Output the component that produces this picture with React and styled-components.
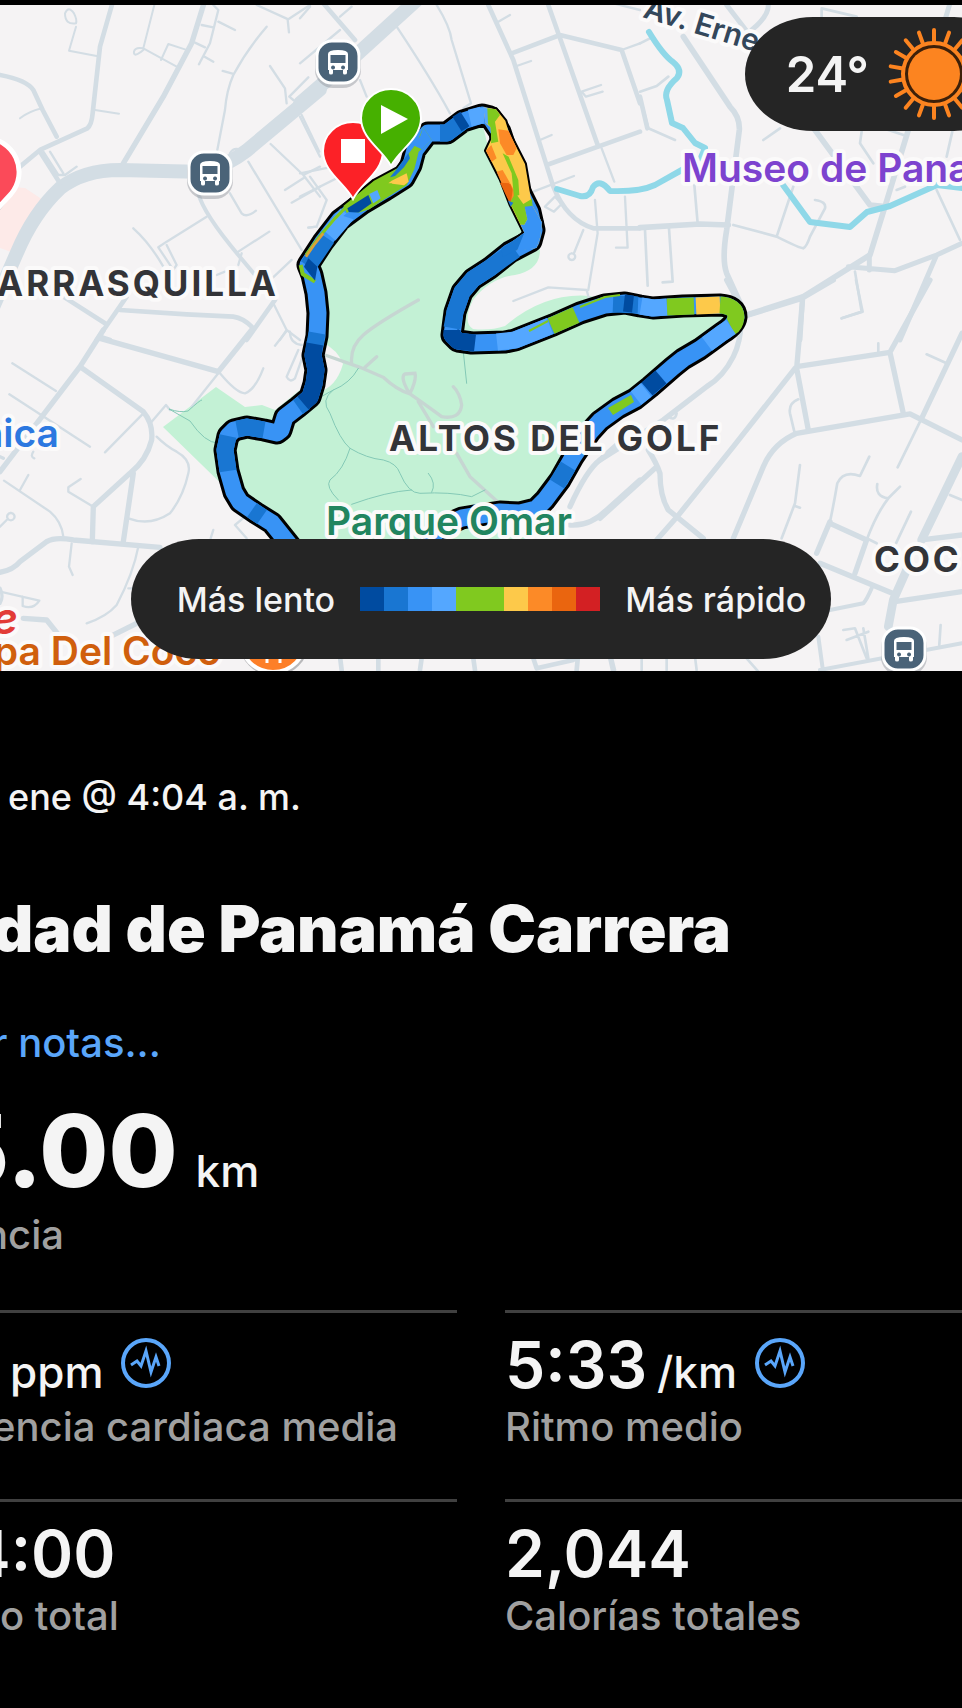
import React from "react";
import styled, { createGlobalStyle } from "styled-components";

const GlobalStyle = createGlobalStyle`
  * { box-sizing: border-box; }
  html { background: #000; }
  body { margin: 0; background: #000; overflow-x: hidden; }
`;

const speedColors = [
  "#004ba0", "#1976d2", "#3893f5", "#54a7ff", "#80c91f",
  "#80c91f", "#fdc94a", "#fc8a27", "#ea650f", "#d32023",
];
const [NAVY, BLUE, SKY, LIGHT, GREEN, , YELLOW, ORANGE, RUST] = speedColors;

/* ---------- layout ---------- */

const Page = styled.main`
  padding-top: 5px;
  min-height: 100vh;
  overflow: hidden;
  background: #000;
  color: #f4f4f4;
  font-family: Inter, "Liberation Sans", sans-serif;
  font-weight: 500;
`;

const MapPanel = styled.section`
  position: relative;
  overflow: hidden;
`;

const MapCanvas = styled.svg`
  display: block;
  width: 100%;
  height: auto;
`;

const MapLabel = styled.text`
  font-family: Inter, "Liberation Sans", sans-serif;
  font-weight: ${(p) => (p.$district ? 700 : 600)};
  font-size: ${(p) => p.$size || 39}px;
  fill: ${(p) => p.$color || "#333438"};
  letter-spacing: ${(p) => (p.$district ? "3px" : "normal")};
  stroke: #fbfafa;
  stroke-width: 8px;
  stroke-linejoin: round;
  paint-order: stroke;
`;

const Pill = styled.div`
  display: flex;
  align-items: center;
  background: #252525;
  border-radius: 68px / 50%;
`;

const Weather = styled(Pill)`
  position: absolute;
  top: 12px;
  right: -60px;
  height: 114px;
  padding: 0 41px;
  gap: 18px;
  font-size: 49px;
  font-weight: 600;
`;

const LegendDock = styled.div`
  position: absolute;
  left: 0;
  right: 0;
  bottom: 12px;
  display: flex;
  justify-content: center;
`;

const Legend = styled(Pill)`
  height: 120px;
  padding: 0 25px 0 46px;
  gap: 25px;
  font-size: 34px;
  white-space: nowrap;
`;

const Scale = styled.div`
  display: flex;
`;

const Swatch = styled.span`
  width: 24px;
  height: 24px;
  background: ${(p) => p.$color};
`;

const Details = styled.section`
  padding-top: 104px;
`;

/* $bleed counts 8px steps that a line runs past the screen's left edge. */
const Line = styled.div`
  margin-left: ${(p) => (p.$bleed || 0) * -8}px;
  white-space: nowrap;
`;

const DateLine = styled(Line)`
  margin-bottom: 70px;
  font-size: 36px;
  line-height: 44px;
`;

const Title = styled(Line)`
  margin-top: 0;
  margin-bottom: 50px;
  font-size: 64px;
  line-height: 80px;
  font-weight: 900;
`;

const NotesLink = styled(Line)`
  display: block;
  margin-bottom: 24px;
  font-size: 40px;
  line-height: 48px;
  color: #5aa6fa;
  text-decoration: none;
`;

const Headline = styled.div`
  margin-bottom: 51px;
`;

const ValueRow = styled(Line)`
  display: flex;
  align-items: baseline;
  gap: ${(p) => (p.$large ? 18 : 10)}px;
  height: ${(p) => (p.$large ? 120 : 76)}px;
  line-height: ${(p) => (p.$large ? 120 : 76)}px;
  font-size: ${(p) => (p.$large ? 100 : 64)}px;
  font-weight: ${(p) => (p.$large ? 800 : 600)};
`;

const Value = styled.span`
  /* keeps the row's baseline when there is no number to show */
  &:empty::before {
    content: "\\200b";
  }
`;

const Unit = styled.span`
  font-size: 44px;
  font-weight: 500;
`;

const Label = styled(Line)`
  font-size: 40px;
  line-height: 48px;
  color: #a0a0a0;
`;

const Stats = styled.div`
  display: grid;
  grid-template-columns: minmax(0, 1fr) minmax(0, 1fr);
  column-gap: 48px;
`;

const Stat = styled.div`
  border-top: 3px solid #404040;
  padding: 14px 0 48px;
`;

const GraphButton = styled.button`
  padding: 0;
  border: 0;
  margin-left: 8px;
  background: none;
  color: #5aa6fa;
  line-height: 0;
  cursor: pointer;
`;

/* ---------- map drawing ---------- */

/* Each tile holds its roads as [width, path], in thirds of a map unit. */
const tiles = [
  {
    x: 0, y: 0,
    roads: [
      [42, "M-20,920 L50,760 Q100,640 180,565 Q250,510 360,510 L620,516 Q690,490 740,452 L960,268"],
      [14, "M340,0 L300,140 L278,340 Q275,375 262,385 L120,450 L60,500 M0,225 Q80,240 100,270 L128,330 L170,410 M120,455 L180,550"],
      [16, "M615,0 L575,130 L490,290 L370,490"],
      [6, "M60,355 Q85,335 125,325 M285,330 L357,341 M290,168 L207,152 L228,80 M228,70 Q195,75 195,40 Q205,15 222,40 Q232,60 228,70"],
      [6, "M463,15 L430,145 L530,200 M430,150 Q400,175 402,155 Q405,140 430,145 M483,180 L505,132 L555,148"],
      [7, "M640,15 L655,30 L630,130 L597,193 M655,65 L705,90 M585,128 L615,142 M610,168 L640,185 M605,75 L640,82"],
      [7, "M800,80 Q740,150 700,225 Q680,270 675,330 L652,450 M668,213 L700,222 M770,15 L865,58 L930,15 M863,58 L867,97"],
      [7, "M810,198 L855,265 L860,310 M868,290 L925,232 M868,290 L880,300 M905,345 L958,455 M812,432 L910,525 L960,500 M855,570 L910,535 M875,608 L960,560 M745,485 L905,750 M910,525 L960,590 M925,683 L950,680"],
      [12, "M595,580 Q610,640 715,765 L765,825"],
      [7, "M690,580 L725,640 Q740,655 768,632 M690,460 Q700,440 725,450 M620,650 L500,725 L475,742 L520,810 L530,795 L500,735 M400,685 Q450,730 490,800 M715,755 L808,695 M715,795 L725,760"],
      [7, "M130,455 L175,525 L195,525 L230,500 M150,455 L190,520 M790,860 L875,780 M650,825 L675,815 M820,910 L860,990 L840,1020 M860,990 L900,1020"],
      [14, "M190,890 L315,970 M380,890 L290,1020 M360,930 L560,943 L700,950 Q730,955 755,980 M825,900 L740,1020 M300,1010 L330,1020"],
    ],
  },
  {
    x: 300, y: 0,
    roads: [
      [42, "M0,310 L180,155 L350,0"],
      [14, "M70,10 L165,120 M565,15 L640,180 L760,560 Q800,660 880,685 L1020,685 M745,15 L895,440 M635,160 L780,105 L965,150 L1020,310 M740,495 L1020,395"],
      [7, "M120,50 L155,20 M0,55 L30,20 M0,190 L120,90 M290,80 Q390,230 450,340 M410,15 Q450,80 455,120 L513,310 L490,325 M590,68 L630,45 M650,198 L693,183 M720,420 L755,405 M905,445 L943,545"],
      [7, "M700,575 L822,528 M903,255 L845,275 L858,290 L908,275 M965,150 L1020,130 M735,620 L765,590 L785,612 L762,635 Z M885,600 L893,700 L865,870 M975,590 L983,743 L948,743 M850,690 L822,760 M815,760 a10,10 0 1 0 1,0"],
      [7, "M180,240 L200,290 M0,350 L60,470 M0,590 L140,520 M30,530 L80,600 L50,680 L25,683 M0,520 L100,500 M900,0 L1020,30 M640,903 L745,862 L860,870 L868,900"],
    ],
  },
  {
    x: 640, y: 0,
    roads: [
      [17, "M130,110 L270,320 Q300,350 298,390 L260,690 Q245,780 260,820 L310,930 M0,683 L180,672 L265,675 M320,945 L490,890 L690,765 L735,620 L805,390 M735,620 L690,615 L525,390"],
      [15, "M625,800 L765,812 L890,765 L966,730 M688,765 V810 M890,765 L780,1020 M488,890 L480,1020 M260,15 L325,100 M385,15 Q385,50 335,90 M930,10 L915,60"],
      [8, "M280,675 L410,710 Q480,745 490,745 Q500,740 510,710 L555,625 Q560,605 525,600 M460,560 L410,710 M163,555 L173,670 M15,690 L23,857 M87,685 L98,845 L68,847"],
      [8, "M645,815 L665,935 L605,955 M890,570 L960,720 M0,275 L50,258 L85,230 M0,290 L25,385 L105,420 M0,130 L30,115 M370,420 L420,385 M665,395 L660,430 L700,490 M745,390 L800,408 M937,395 L920,470 M770,570 L795,560 M545,50 V25 L650,50"],
      [14, "M0,290 L22,385"],
    ],
  },
  {
    x: 0, y: 330,
    roads: [
      [16, "M310,0 L240,110 L0,425 M300,25 L655,125 L755,0 M240,110 L430,245 Q460,280 455,330 Q440,390 390,430 L280,530 L277,635 M400,430 L370,635"],
      [16, "M0,727 Q40,720 60,695 L140,635 Q165,620 220,630 L480,652 M70,865 L140,870 L180,920 M330,920 L410,880"],
      [7, "M37,100 L168,183 M28,193 L270,350 M430,250 L315,367 M455,275 L498,225 L510,240 M470,320 Q500,350 530,365 Q575,390 565,430 Q550,500 510,550 Q450,590 385,565"],
      [7, "M655,130 L575,230 M660,130 Q710,190 735,190 Q765,180 790,115 M12,452 L150,545 Q185,575 190,620 M60,480 L85,435 M280,530 L205,485 V472 L242,447 M215,640 L207,710 L218,735 M415,650 Q400,730 350,825 Q320,860 260,880 M0,590 L20,570 M32,549 a11,11 0 1 0 1,0"],
      [7, "M100,365 Q90,380 103,385 M0,785 L118,812 Q100,840 68,828 L68,800 M385,775 h20 M735,560 L705,585 L740,625 M640,600 L632,625 M825,47 L858,5 M870,5 Q870,40 905,45 M895,60 L860,140 Q870,160 885,145 L915,60"],
      [10, "M0,775 Q12,800 0,820 M0,380 L10,385"],
    ],
  },
  {
    x: 300, y: 280,
    roads: [
      [16, "M810,680 Q860,570 900,540 L950,495 M810,735 Q870,740 920,690 L1020,600"],
      [14, "M120,1130 L125,1170 M235,1135 V1170 M365,1135 L360,1170 M520,1135 L525,1170 M700,1135 L710,1165 L820,1140 L835,1120 L830,1170 M930,1130 L940,1175"],
    ],
  },
  {
    x: 600, y: 280,
    roads: [
      [16, "M380,0 L415,65 Q435,160 400,230 Q370,290 320,320 L190,420 L0,540 M445,105 L605,55 L700,0 M608,55 L590,265 L625,450 M585,265 L400,500 L230,712 L170,780 M590,260 L870,217 L990,0 M870,217 L910,400 M1086,160 L965,415"],
      [16, "M400,775 L490,560 Q520,490 590,460 L930,402 L1086,480 M965,780 L1086,765 M885,965 L1086,935 M890,945 L660,850 M690,725 L650,820 M690,730 L800,780 L765,880 M145,510 Q170,550 180,580 Q180,650 205,690 L310,775 M0,715 L165,565"],
      [26, "M1086,530 L965,780 M920,870 L880,960 L865,1040"],
      [8, "M830,790 L800,775 M600,555 L585,670 L545,775 M585,678 L600,683 M690,725 Q700,680 712,610 Q730,570 780,588 L808,530 M832,612 Q825,650 865,655 L900,620 M865,655 Q830,700 800,780 M933,695 L888,790 M965,415 L893,562 M595,358 Q565,370 570,400 L583,455"],
      [8, "M768,0 L788,95 L725,115 M835,190 V215 M980,223 L1040,250 M1050,645 L1086,660 M230,400 Q225,425 205,410"],
      [12, "M815,925 Q800,960 790,970 L690,990 M655,1070 L668,1165 M660,1170 L1086,1090"],
      [8, "M730,1050 L765,1045 L800,1135 M740,1080 L805,1055 M790,1045 L805,1135 M1022,1035 L1018,1095 M440,1135 L475,1175 M285,1130 L290,1170 M200,1130 V1170 M125,1130 V1170 M35,1130 L45,1170"],
    ],
  },
];

const routePath =
  "M292,548 L272,523 L256,513 L240,502 L234,492 L228,471 L225,450 L228,436 L234,430 L247,427 L264,430 L277,433 L281,430 L285,417 L298,407 L310,397 L314,384 L316,370 L313,355 L317,336 L318,313 L316,293 L312,275 L308,265 L323,242 L340,220 L363,203 L385,190 L404,178 L411,165 L415,150 L428,133 L447,133 L463,121 L482,115 L490,117 L500,132 L506,150 L519,190 L530,212 L534,230 L531,241 L510,252 L490,268 L473,279 L462,292 L455,312 L452,335 L458,341 L472,343 L505,342 L515,340 L553,325 L580,313 L605,305 L625,303 L640,306 L653,308 L683,306 L720,305 Q736,306 736,317 Q735,325 722,333 L700,349 L683,359 L673,367 L650,387 L635,399 L618,408 L600,421 L590,432 L573,457 L560,480 L545,500 L536,509 L520,513 L500,512 L480,515 L462,518 L448,524 L436,532 L430,545";

/* Stretches of the run whose pace differs from the base blue. */
const paceStretches = [
  [BLUE, "M228,471 L225,450 L228,436 M237,429 L247,427 L264,430"],
  [BLUE, "M252,510 L262,517 M298,407 L305,402"],
  [NAVY, "M303,403 L310,397 L314,384 L316,370 L313,355 L315,342"],
  [BLUE, "M315,344 L317,333 M308,266 L327,238"],
  [LIGHT, "M329,235 L347,214"],
  [BLUE, "M440,133 L447,133 L463,121"],
  [NAVY, "M457,124 L465,119"],
  [LIGHT, "M470,118 L482,115"],
  [BLUE, "M515,250 L490,268 L473,279 L462,292 L455,312 L452,328"],
  [NAVY, "M452,330 L452,335 L458,341 L475,343"],
  [LIGHT, "M497,342 L515,340 L550,326"],
  [GREEN, "M551,326 L576,315"],
  [BLUE, "M613,304 L638,305"],
  [NAVY, "M624,303 L633,304"],
  [LIGHT, "M641,306 L653,308 L667,307"],
  [GREEN, "M667,307 L694,306"],
  [YELLOW, "M696,306 L720,305"],
  [GREEN, "M720,305 Q736,306 736,317 Q735,325 731,327"],
  [LIGHT, "M731,327 L722,333 L707,344"],
  [NAVY, "M661,377 L647,389"],
  [LIGHT, "M646,390 L636,398"],
  [BLUE, "M568,466 L557,484"],
];

/* Two places where outbound and return tracks lie side by side. */
const fastBend =
  "M610,52 L648,58 L676,92 L687,128 L735,222 L756,345 L786,397 L781,440 L770,474 L690,482 L690,460 L733,428 L692,345 L662,268 L618,182 L634,148 L632,112 L616,98 Z";
const startBend =
  "M430,112 L410,160 L352,235 L282,272 L190,348 L205,378 L268,358 L320,323 L380,286 L403,238 L416,185 L455,150 Z";

const bendPatches = [
  [YELLOW, fastBend],
  [LIGHT, "M610,52 L625,56 L628,105 L616,98 Z"],
  [GREEN, "M622,55 L648,58 L660,75 L645,95 L655,155 L633,160 L634,148 L632,112 L624,102 Z"],
  [ORANGE, "M655,118 L686,122 L710,175 L700,195 L680,195 L660,160 Z M618,182 L634,165 L650,205 L635,215 Z"],
  [ORANGE, "M650,245 L668,240 L705,305 L695,345 L690,340 Z"],
  [RUST, "M660,278 L690,280 L698,300 L692,345 Z"],
  [GREEN, "M668,190 L686,200 L715,270 L718,315 L702,320 L695,250 Z"],
  [GREEN, "M690,338 L706,308 L730,342 L756,326 L758,350 L735,352 L742,388 L733,404 L722,404 Z"],
  [BLUE, "M684,332 L700,338 L692,350 Z"],
  [SKY, "M734,350 L757,347 L786,397 L781,440 L770,474 L716,482 L690,460 L733,428 L722,404 L733,404 L742,388 Z"],
  [BLUE, "M733,428 L712,480 L690,490 L668,500 L664,474 L690,458 Z"],
];

const startPatches = [
  [GREEN, startBend],
  [SKY, "M430,112 L455,150 L425,178 L398,165 L420,140 Z"],
  [BLUE, "M385,190 L352,235 L330,262 L345,258 L372,232 L390,205 Z"],
  [YELLOW, "M335,272 L380,250 L386,275 L372,286 L325,280 Z"],
  [GREEN, "M290,285 L335,280 L350,300 L320,323 L296,328 Z"],
  [LIGHT, "M268,312 L292,300 L302,325 L280,340 Z"],
  [NAVY, "M202,355 L265,315 L275,340 L235,368 L208,370 Z"],
  [SKY, "M205,366 L240,368 L220,388 L190,378 Z"],
];

const Bus = ({ x, y }) => (
  <g transform={`translate(${x} ${y})`}>
    <rect x="-23" y="-20" width="46" height="46" rx="18" fill="#8d9299" opacity=".45" />
    <rect x="-21" y="-21" width="42" height="42" rx="15" fill="#4a6378" stroke="#fff" strokeWidth="3" />
    <path
      fill="#fff"
      fillRule="evenodd"
      d="M-10,-8 Q-10,-12 0,-12 Q10,-12 10,-8 V8 H9 V11 Q9,12.500 6.500,12.500 Q5,12.500 5,11 V8 H-5 V11 Q-5,12.500 -7,12.500 Q-9,12.500 -9,11 V8 H-10 Z M-7.500,-7 V1 H7.500 V-7 Z M-5,3.500 a2,2 0 1 0 .1,0 Z M5,3.500 a2,2 0 1 0 .1,0 Z"
    />
  </g>
);

const Pin = ({ x, y, color, children }) => (
  <g transform={`translate(${x} ${y})`}>
    <path
      d="M0,0 C-8,-16 -30,-27 -30,-48 A30,29 0 0 1 30,-48 C30,-27 8,-16 0,0 Z"
      fill={color}
      stroke="#fff"
      strokeWidth="2"
    />
    {children}
  </g>
);

const RouteMap = () => (
  <MapCanvas viewBox="0 5 962 666" role="img" aria-label="Mapa de la carrera">
    <rect x="0" y="0" width="962" height="680" fill="#f5f3f4" />
    <path d="M0,186 L25,188 L43,200 L14,253 L0,248 Z" fill="#fdeae8" />
    <path
      d="M163,427 L216,387 L245,407 L262,405 L275,410 L312,380 L316,280 L312,262 L345,220 L405,180 L430,138 L450,140 L482,122 L490,155 L525,230 L540,250 Q540,270 515,275 Q490,278 473,300 Q462,322 473,329 Q490,331 505,326 Q545,292 590,296 L620,303 L733,310 L720,330 L600,420 L565,480 L535,512 L530,550 L290,550 L240,502 Z"
      fill="#c3f1d5"
    />
    <path d="M322,342 Q338,350 343,364 Q336,388 318,392 Z" fill="#f5f3f4" />

    <g fill="none" stroke="#d3dde4" strokeLinejoin="round" strokeLinecap="round">
      {tiles.map((t) => (
        <g key={`${t.x}-${t.y}`} transform={`translate(${t.x} ${t.y}) scale(.3333)`}>
          {t.roads.map(([w, d]) => (
            <path key={d} d={d} strokeWidth={w} />
          ))}
        </g>
      ))}
    </g>

    <g fill="none" transform="translate(300 280) scale(.3333)" strokeLinecap="round">
      <path
        stroke="#c6d6d2"
        strokeWidth="10"
        d="M355,60 Q230,130 190,165 Q150,200 155,250 M75,225 L180,262 L250,292 Q290,330 330,342 Q370,370 425,410 Q480,420 485,375 Q480,340 460,320 M195,262 L230,230 M325,335 Q300,290 315,282 L345,280 Q350,300 330,340 M355,365 L400,440 M470,520 L510,590 L620,690"
      />
      <path
        stroke="#84c9b6"
        strokeWidth="3"
        d="M175,265 Q150,310 100,330 Q60,360 90,400 Q120,480 150,505 Q200,535 250,540 Q290,550 300,580 Q325,640 360,640 Q450,635 515,650 L555,630 M150,505 Q130,570 90,600 Q75,620 115,660 M155,673 Q260,635 335,630 M385,580 Q410,610 395,637 M490,215 L500,310 M60,352 L100,330"
      />
    </g>
    <path d="M169,409 Q180,413 188,411 Q200,400 202,400 M169,409 L190,421 Q205,443 218,443" fill="none" stroke="#84c9b6" />

    <g fill="none" stroke="#8fd8e8" strokeWidth="6" strokeLinejoin="round" strokeLinecap="round">
      <path d="M649,32 Q663,55 673,62 Q683,70 677,78 Q663,90 667,100 L672,123 L683,128 L695,143 L705,148 L700,160 L680,171 L655,185 Q640,192 610,191 Q600,178 593,187 Q590,198 580,196 L557,189" />
      <path d="M783,185 L810,222 L850,227 L867,212 L890,206 L937,185 L962,188" />
    </g>

    <g fill="none" strokeLinejoin="round">
      <path d={routePath} stroke="#000" strokeWidth="23" />
      <g transform="translate(280 90) scale(.3333)" stroke="#000" strokeWidth="12">
        <path d={fastBend} />
        <path d={startBend} />
      </g>
      <path d={routePath} stroke={SKY} strokeWidth="17" />
      {paceStretches.map(([color, d]) => (
        <path key={d} d={d} stroke={color} strokeWidth="17" />
      ))}
      <g transform="translate(280 90) scale(.3333)">
        {[...bendPatches, ...startPatches].map(([color, d]) => (
          <path key={color + d} d={d} fill={color} />
        ))}
        <path d="M612,52 L590,56 L565,64 L575,110 L600,98 L612,96 Z" fill={LIGHT} />
        <path d="M78,495 L118,440 L165,385 L200,350" stroke={GREEN} strokeWidth="9" />
        <path d="M78,500 L102,465 L130,430" stroke="#d9a13a" strokeWidth="8" />
        <path d="M62,525 L68,552 L105,575" stroke={GREEN} strokeWidth="12" />
        <path d="M85,505 L112,530 L105,572 L72,530 Z" fill={NAVY} />
      </g>
      <path d="M529,331 L548,321 M580,307 L605,297 L620,295" stroke={GREEN} strokeWidth="2" />
      <path d="M608,408 L631,395 L634,402 L613,415 Z" fill={GREEN} />
    </g>

    <MapLabel x="642" y="17" $size={30} $color="#33475b" transform="rotate(17 642 17)">Av. Erne</MapLabel>
    <MapLabel x="682" y="182" $color="#7d43cf">Museo de Pana</MapLabel>
    <MapLabel x="279" y="296" textAnchor="end" $size={35} $district>ARRASQUILLA</MapLabel>
    <MapLabel x="59" y="447" textAnchor="end" $color="#2c78e0">nica</MapLabel>
    <MapLabel x="389" y="451" $size={35} $district>ALTOS DEL GOLF</MapLabel>
    <MapLabel x="326" y="535" $color="#22855f">Parque Omar</MapLabel>
    <MapLabel x="874" y="572" $size={35} $district>COC</MapLabel>
    <MapLabel x="18" y="634" textAnchor="end" $size={44} $color="#e23c37" fontStyle="italic">e</MapLabel>

    <circle cx="274" cy="641" r="35" fill="#b9b9bb" />
    <circle cx="273" cy="639" r="33" fill="#fd7f28" stroke="#fff" strokeWidth="4" />
    <path d="M267,650 V663 M280,650 V663" stroke="#fff" strokeWidth="3" />
    <MapLabel x="221" y="665" textAnchor="end" $color="#d05f0d">pa Del Coco</MapLabel>

    <path d="M-15,140 a34,34 0 0 1 26,56 L-12,226 Z" fill="#d2cdcf" />
    <path d="M-15,138 a34,34 0 0 1 26,56 L-15,222 Z" fill="#fb4a59" stroke="#fff" strokeWidth="5" />

    <Bus x={210} y={173} />
    <Bus x={338} y={62} />
    <Bus x={904} y={649} />

    <Pin x={353} y={199} color="#fc2127">
      <rect x="-12" y="-60" width="24" height="24" fill="#fff" />
    </Pin>
    <Pin x={391} y={166} color="#46b000">
      <path d="M-10,-61 L17,-47 L-10,-32 Z" fill="#fff" />
    </Pin>
  </MapCanvas>
);

const Sun = () => (
  <svg width="94" height="94" viewBox="-47 -47 94 94" aria-hidden="true">
    <g stroke="#fc8420" strokeWidth="4" strokeLinecap="round">
      {Array.from({ length: 18 }, (_, i) => (
        <line key={i} y1="-33" y2="-44" transform={`rotate(${i * 20})`} />
      ))}
    </g>
    <circle r="31" fill="#3d2009" stroke="#fc8420" strokeWidth="4" />
    <circle r="26" fill="#fc8420" />
  </svg>
);

const Graph = ({ label }) => (
  <GraphButton type="button" aria-label={label}>
    <svg width="50" height="50" viewBox="0 0 50 50" fill="none" stroke="currentColor">
      <circle cx="25" cy="25" r="23" strokeWidth="4" />
      <path d="M10,27 L16,23 L20,28 L25,13 L30,34 L35,19 L38,28" strokeWidth="3" strokeMiterlimit="8" />
    </svg>
  </GraphButton>
);

const stats = [
  { unit: "ppm", label: "encia cardiaca media", labelBleed: 1, graph: true },
  { value: "5:33", unit: "/km", label: "Ritmo medio", graph: true },
  { value: "4:00", valueBleed: 4, label: "o total" },
  { value: "2,044", label: "Calorías totales" },
];

export default function App() {
  return (
    <>
      <GlobalStyle />
      <Page>
        <MapPanel>
          <RouteMap />
          <Weather>
            <span>24°</span>
            <Sun />
          </Weather>
          <LegendDock>
            <Legend>
              <span>Más lento</span>
              <Scale>
                {speedColors.map((c, i) => (
                  <Swatch key={i} $color={c} />
                ))}
              </Scale>
              <span>Más rápido</span>
            </Legend>
          </LegendDock>
        </MapPanel>
        <Details>
          <DateLine $bleed={-1}>ene @ 4:04 a. m.</DateLine>
          <Title as="h1" $bleed={1}>dad de Panamá Carrera</Title>
          <NotesLink as="a" href="#notas" $bleed={1}>r notas...</NotesLink>
          <Headline>
            <ValueRow $large $bleed={7}>
              <Value>5.00</Value>
              <Unit>km</Unit>
            </ValueRow>
            <Label $bleed={2}>ncia</Label>
          </Headline>
          <Stats>
            {stats.map((s) => (
              <Stat key={s.label}>
                <ValueRow $bleed={s.valueBleed}>
                  <Value>{s.value}</Value>
                  {s.unit && <Unit>{s.unit}</Unit>}
                  {s.graph && <Graph label={`Gráfico: ${s.label}`} />}
                </ValueRow>
                <Label $bleed={s.labelBleed}>{s.label}</Label>
              </Stat>
            ))}
          </Stats>
        </Details>
      </Page>
    </>
  );
}
